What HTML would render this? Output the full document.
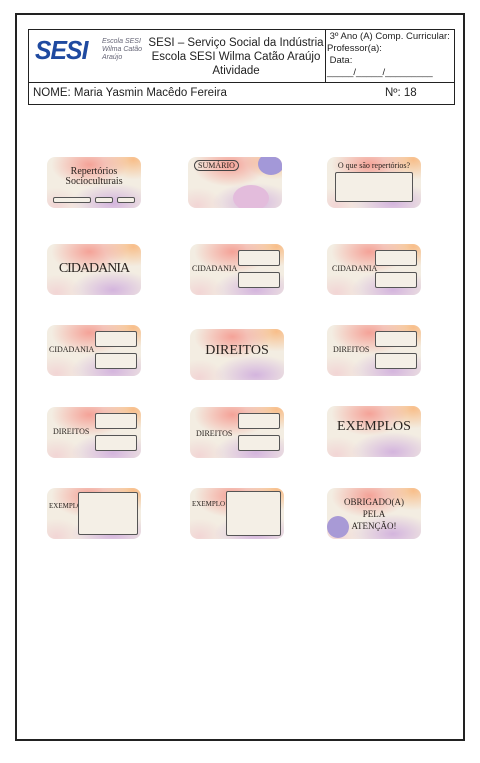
<!DOCTYPE html>
<html><head><meta charset="utf-8"><style>
*{margin:0;padding:0;box-sizing:border-box}
body{width:480px;height:763px;background:#fff;position:relative;font-family:"Liberation Sans",sans-serif;overflow:hidden}
.page{position:absolute;left:15px;top:13px;width:450px;height:728px;border:2px solid #222}
.hdr{position:absolute;left:28px;top:29px;width:427px;height:76px;border:1.5px solid #222}
.hdr .v{position:absolute;left:296px;top:0;height:52px;border-left:1.5px solid #222}
.hdr .h{position:absolute;left:0;top:52px;width:100%;border-top:1.5px solid #222}
.t{position:absolute;font-size:11px;color:#222;line-height:13px}
.card{position:absolute;width:94px;height:51px;border-radius:8px;overflow:hidden;
background:radial-gradient(ellipse 38px 22px at 45% 15%,rgba(245,130,120,.7),transparent),radial-gradient(ellipse 42px 20px at 70% 90%,rgba(195,150,220,.65),transparent),radial-gradient(ellipse 30px 20px at 92% 5%,rgba(250,170,100,.7),transparent),radial-gradient(ellipse 25px 18px at 10% 95%,rgba(240,190,200,.5),transparent),#f3ede2}
.card b{position:absolute;left:0;right:0;text-align:center;font-family:"Liberation Serif",serif;color:#2a2420;font-weight:normal}
.box{position:absolute;border:1px solid #555;background:#f4efe6;border-radius:2px}
</style></head><body>
<div class="page"></div>
<div class="hdr"><div class="v"></div><div class="h"></div></div>
<div class="t" style="left:35px;top:36px;font-size:26px;line-height:28px;font-weight:bold;font-style:italic;color:#1f4aa0;letter-spacing:-1px;transform:scaleX(.95);transform-origin:left">SESI</div>
<div class="t" style="left:102px;top:38px;font-size:7px;line-height:8px;color:#667;font-style:italic">Escola SESI<br>Wilma Catão<br>Araújo</div>
<div class="t" style="left:148px;top:36px;width:176px;text-align:center;font-size:11.5px;line-height:14px">SESI – Serviço Social da Indústria<br>Escola SESI Wilma Catão Araújo<br>Atividade</div>
<div class="t" style="left:327px;top:31px;font-size:9.5px;line-height:12px">&nbsp;3º Ano (A) Comp. Curricular:<br>Professor(a):<br>&nbsp;Data:<br>_____/_____/_________</div>
<div class="t" style="left:33px;top:87px;font-size:11.5px">NOME: Maria Yasmin Macêdo Fereira</div>
<div class="t" style="left:385px;top:87px;font-size:11.5px">Nº: 18</div>

<div class="card" style="left:47px;top:157px"><b style="top:10px;font-size:10px;line-height:10px">Repertórios<br>Socioculturais</b><div class="box" style="left:6px;top:40px;width:38px;height:6px"></div><div class="box" style="left:48px;top:40px;width:18px;height:6px"></div><div class="box" style="left:70px;top:40px;width:18px;height:6px"></div></div>
<div class="card" style="left:188px;top:157px"><b style="left:6px;right:auto;top:3px;font-size:8px;border:1px solid #444;border-radius:6px;padding:0 3px">SUMÁRIO</b><div style="position:absolute;left:70px;top:-4px;width:26px;height:22px;background:#a398d8;border-radius:50%"></div><div style="position:absolute;left:45px;top:28px;width:36px;height:26px;background:#e3bcdc;border-radius:50%"></div></div>
<div class="card" style="left:327px;top:157px"><b style="top:4px;font-size:8px">O que são repertórios?</b><div class="box" style="left:8px;top:15px;width:78px;height:30px"></div></div>

<div class="card" style="left:47px;top:244px"><b style="top:17px;font-size:14px;letter-spacing:-1px">CIDADANIA</b></div>
<div class="card" style="left:190px;top:244px"><b style="left:2px;right:auto;top:20px;font-size:8px">CIDADANIA</b><div class="box" style="left:48px;top:6px;width:42px;height:16px"></div><div class="box" style="left:48px;top:28px;width:42px;height:16px"></div></div>
<div class="card" style="left:327px;top:244px"><b style="left:5px;right:auto;top:20px;font-size:8px">CIDADANIA</b><div class="box" style="left:48px;top:6px;width:42px;height:16px"></div><div class="box" style="left:48px;top:28px;width:42px;height:16px"></div></div>

<div class="card" style="left:47px;top:325px"><b style="left:2px;right:auto;top:20px;font-size:8px">CIDADANIA</b><div class="box" style="left:48px;top:6px;width:42px;height:16px"></div><div class="box" style="left:48px;top:28px;width:42px;height:16px"></div></div>
<div class="card" style="left:190px;top:329px"><b style="top:14px;font-size:14px">DIREITOS</b></div>
<div class="card" style="left:327px;top:325px"><b style="left:6px;right:auto;top:20px;font-size:8px">DIREITOS</b><div class="box" style="left:48px;top:6px;width:42px;height:16px"></div><div class="box" style="left:48px;top:28px;width:42px;height:16px"></div></div>

<div class="card" style="left:47px;top:407px"><b style="left:6px;right:auto;top:20px;font-size:8px">DIREITOS</b><div class="box" style="left:48px;top:6px;width:42px;height:16px"></div><div class="box" style="left:48px;top:28px;width:42px;height:16px"></div></div>
<div class="card" style="left:190px;top:407px"><b style="left:6px;right:auto;top:22px;font-size:8px">DIREITOS</b><div class="box" style="left:48px;top:6px;width:42px;height:16px"></div><div class="box" style="left:48px;top:28px;width:42px;height:16px"></div></div>
<div class="card" style="left:327px;top:406px"><b style="top:13px;font-size:14px">EXEMPLOS</b></div>

<div class="card" style="left:47px;top:488px"><b style="left:2px;right:auto;top:14px;font-size:7px">EXEMPLO</b><div class="box" style="left:31px;top:4px;width:60px;height:43px"></div></div>
<div class="card" style="left:190px;top:488px"><b style="left:2px;right:auto;top:12px;font-size:7px">EXEMPLO</b><div class="box" style="left:36px;top:3px;width:55px;height:45px"></div></div>
<div class="card" style="left:327px;top:488px"><b style="top:8px;font-size:9px;line-height:12px">OBRIGADO(A)<br>PELA<br>ATENÇÃO!</b><div style="position:absolute;left:0;top:28px;width:22px;height:22px;background:#a89ad6;border-radius:50%"></div></div>
</body></html>
